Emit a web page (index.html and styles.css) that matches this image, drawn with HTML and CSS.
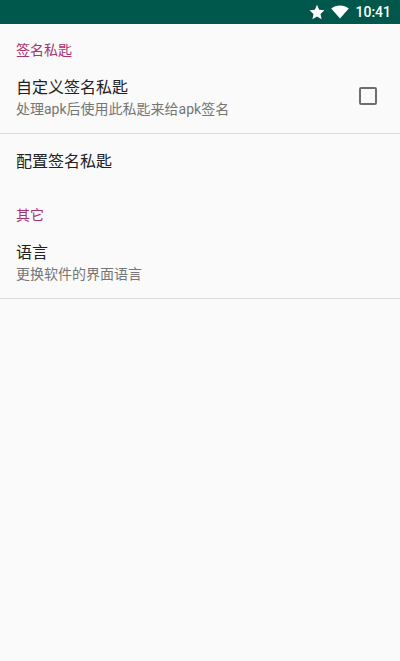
FILE: index.html
```html
<!DOCTYPE html>
<html lang="zh-CN">
<head>
<meta charset="utf-8">
<title>设置</title>
<link rel="stylesheet" href="styles.css">
</head>
<body>
<header class="status-bar">
  <svg class="icon-star" viewBox="0 0 16 16" width="16" height="16"><path d="M8 .8l2.2 4.9 5.3.6-4 3.6 1.1 5.3L8 12.5l-4.6 2.7 1.1-5.3-4-3.6 5.3-.6z"/></svg>
  <svg class="icon-wifi" viewBox="0 0 18 14" width="18" height="14"><path d="M9 13.6L.2 3.4C2.6 1.5 5.6.4 9 .4s6.4 1.1 8.8 3z"/></svg>
  <span class="clock">10:41</span>
</header>
<main class="settings">
  <h2 class="category">签名私匙</h2>
  <div class="row row-two">
    <div class="row-text">
      <div class="title">自定义签名私匙</div>
      <div class="summary">处理apk后使用此私匙来给apk签名</div>
    </div>
    <span class="checkbox"></span>
  </div>
  <div class="row row-one">
    <div class="title">配置签名私匙</div>
  </div>
  <h2 class="category">其它</h2>
  <div class="row row-two">
    <div class="row-text">
      <div class="title">语言</div>
      <div class="summary">更换软件的界面语言</div>
    </div>
  </div>
</main>
</body>
</html>
```

FILE: styles.css
```css
* { box-sizing: border-box; }
html, body { margin: 0; padding: 0; height: 100%; }
body {
  background: #fafafa;
  font-family: "Roboto", "Noto Sans CJK SC", sans-serif;
  overflow: hidden;
}
.status-bar {
  height: 24px;
  background: #00574b;
  color: #fff;
  display: flex;
  align-items: center;
  justify-content: flex-end;
  padding-right: 9px;
}
.icon-star { fill: #fff; margin-right: 6px; }
.icon-wifi { fill: #fff; margin-right: 6px; }
.clock { font-size: 14px; font-weight: 500; line-height: 24px; }
.settings { display: flex; flex-direction: column; }
.category {
  margin: 0;
  padding: 16px 16px 0;
  height: 40px;
  font-size: 14px;
  font-weight: 400;
  line-height: 20px;
  color: #a6336f;
}
.row {
  display: flex;
  padding: 0 16px;
}
.row-two {
  height: 70px;
  padding-top: 14px;
  align-items: flex-start;
  border-bottom: 1px solid #dcdcdc;
}
.row-one { height: 55px; align-items: center; }
.row-text { flex: 1; min-width: 0; }
.title { font-size: 16px; line-height: 20px; color: #212121; }
.summary { font-size: 14px; line-height: 22px; color: #757575; }
.checkbox {
  width: 18px;
  height: 18px;
  margin: 9px 7px 0 0;
  border: 2px solid #6e6e6e;
  border-radius: 2px;
}
```
